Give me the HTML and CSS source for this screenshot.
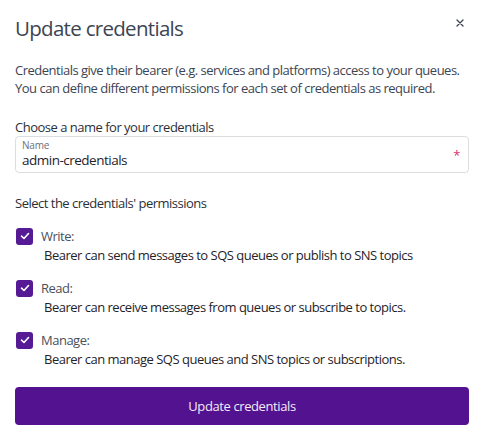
FILE: index.html
```html
<!DOCTYPE html>
<html>
<head>
<meta charset="utf-8">
<link rel="stylesheet" href="styles.css">
</head>
<body>
<div class="modal">
  <div class="header">
    <h1 class="title">Update credentials</h1>
    <button class="close" aria-label="Close">
      <svg width="8" height="8" viewBox="0 0 8 8"><path d="M1 1L7 7M7 1L1 7" stroke="#3d4452" stroke-width="1.3" stroke-linecap="round"/></svg>
    </button>
  </div>
  <p class="intro">Credentials give their bearer (e.g. services and platforms) access to your queues.<br>You can define different permissions for each set of credentials as required.</p>
  <div class="section-label">Choose a name for your credentials</div>
  <div class="field">
    <div class="field-inner">
      <div class="field-label">Name</div>
      <div class="field-value">admin-credentials</div>
    </div>
    <span class="required">*</span>
  </div>
  <div class="section-label perms-label">Select the credentials' permissions</div>
  <div class="perms">
    <div class="perm">
      <div class="perm-head">
        <span class="check"><svg width="10" height="8" viewBox="0 0 10 8"><path d="M1.5 4.2L4 6.5L8.5 1.5" fill="none" stroke="#fff" stroke-width="1.6" stroke-linecap="round" stroke-linejoin="round"/></svg></span>
        <span class="perm-name">Write:</span>
      </div>
      <div class="perm-desc">Bearer can send messages to SQS queues or publish to SNS topics</div>
    </div>
    <div class="perm">
      <div class="perm-head">
        <span class="check"><svg width="10" height="8" viewBox="0 0 10 8"><path d="M1.5 4.2L4 6.5L8.5 1.5" fill="none" stroke="#fff" stroke-width="1.6" stroke-linecap="round" stroke-linejoin="round"/></svg></span>
        <span class="perm-name">Read:</span>
      </div>
      <div class="perm-desc">Bearer can receive messages from queues or subscribe to topics.</div>
    </div>
    <div class="perm">
      <div class="perm-head">
        <span class="check"><svg width="10" height="8" viewBox="0 0 10 8"><path d="M1.5 4.2L4 6.5L8.5 1.5" fill="none" stroke="#fff" stroke-width="1.6" stroke-linecap="round" stroke-linejoin="round"/></svg></span>
        <span class="perm-name">Manage:</span>
      </div>
      <div class="perm-desc">Bearer can manage SQS queues and SNS topics or subscriptions.</div>
    </div>
  </div>
  <button class="submit">Update credentials</button>
</div>
</body>
</html>
```
FILE: styles.css
```css
* { box-sizing: border-box; }
html, body { margin: 0; background: #fff; }
body {
  font-family: "Open Sans", "Noto Sans", sans-serif;
  color: #3d4452;
  font-size: 13px;
  letter-spacing: -0.5px;
}
.modal {
  width: 482px;
  padding: 13px 13px 0 15px;
}
.header {
  display: flex;
  justify-content: space-between;
  align-items: flex-start;
}
.title {
  margin: 0;
  font-size: 20.5px;
  font-weight: 400;
  line-height: 30px;
  color: #3d4452;
  letter-spacing: -0.7px;
}
.close {
  border: 0;
  background: none;
  padding: 0;
  margin: 4px 3px 0 0;
  width: 12px;
  height: 12px;
  display: flex;
  align-items: center;
  justify-content: center;
}
.intro {
  margin: 18px 0 0;
  line-height: 18px;
  color: #3d4452;
  white-space: nowrap;
}
.section-label {
  margin-top: 21px;
  color: #2b2f38;
  line-height: 18px;
}
.field {
  margin-top: 0;
  height: 37px;
  border: 1px solid #dcdde0;
  border-radius: 4px;
  display: flex;
  align-items: center;
  justify-content: space-between;
  padding: 0 8px 1px 6px;
}
.field-inner { display: flex; flex-direction: column; }
.field-label {
  font-size: 10px;
  line-height: 12px;
  color: #6b717c;
  letter-spacing: -0.2px;
}
.field-value {
  font-size: 13.5px;
  line-height: 18px;
  color: #1f232a;
}
.required {
  color: #d4336b;
  font-size: 13px;
  line-height: 12px;
  margin-top: 2px;
}
.perms-label { margin-top: 21px; }
.perms {
  margin-top: 15px;
  display: flex;
  flex-direction: column;
  gap: 15px;
}
.perm-head {
  display: flex;
  align-items: center;
  gap: 8px;
}
.check {
  width: 17px;
  height: 17px;
  margin-left: 1px;
  border-radius: 3px;
  background: #561a94;
  display: flex;
  align-items: center;
  justify-content: center;
}
.perm-name {
  color: #4a505b;
  line-height: 18px;
}
.perm-desc {
  margin-top: 1px;
  margin-left: 29px;
  color: #1f232a;
  line-height: 18px;
}
.submit {
  display: block;
  margin-top: 19px;
  width: 454px;
  height: 38px;
  border: 0;
  border-radius: 4px;
  background: #53128f;
  color: #f2ecf8;
  font-family: inherit;
  font-size: 13px;
  letter-spacing: -0.4px;
}
```
